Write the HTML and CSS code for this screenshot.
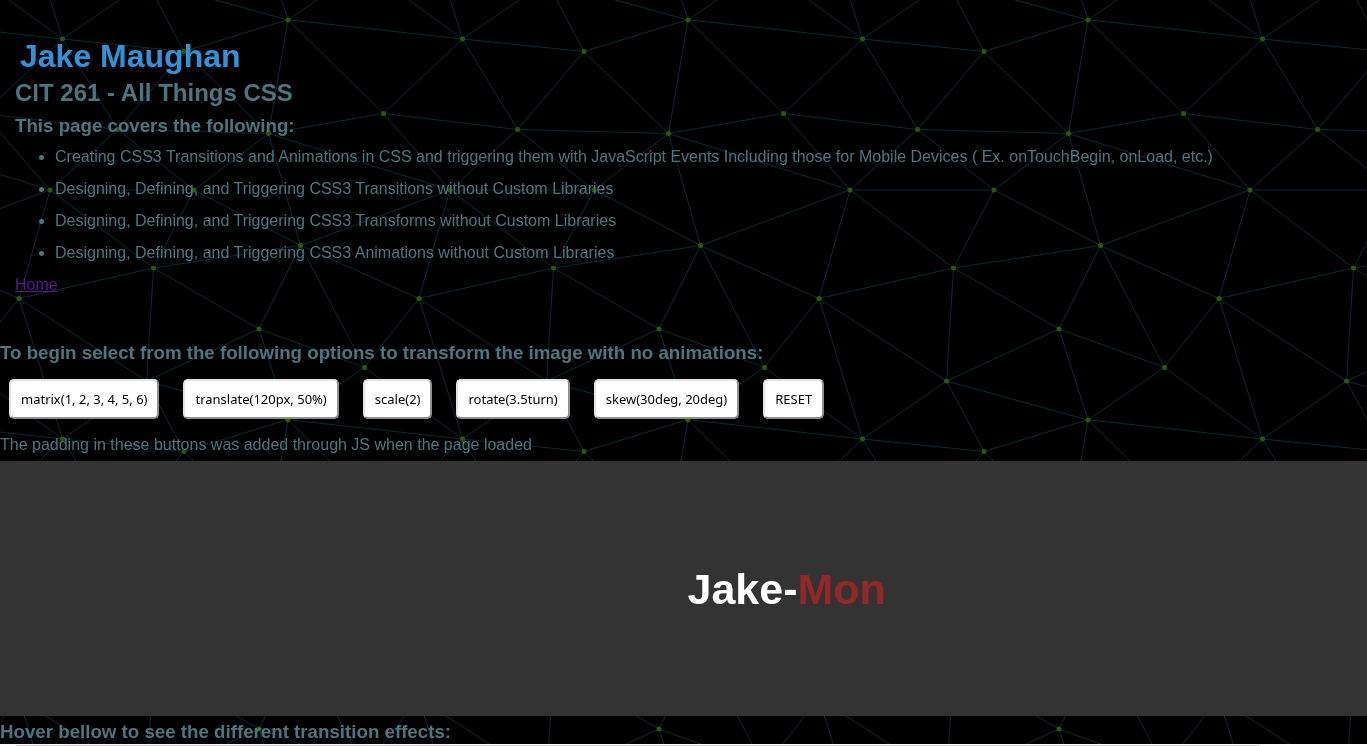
FILE: index.html
```html
<!DOCTYPE html>
<html lang="en">
<head>
<meta charset="utf-8">
<title>Jake Maughan - All Things CSS</title>
<link rel="stylesheet" href="styles.css">
</head>
<body>
<svg class="mesh" aria-hidden="true">
  <defs>
    <g id="web">
      <path class="mesh-line" d="M288 19.700L462.500 39M288 19.700L184 51.500M288 19.700L268.500 133.500M288 19.700L383.500 113.500
        M259 329L288 420M364.300 367.300L288 420M146.600 381L288 420
        M19 298.500L62.500 439M146.600 381L62.500 439M364.300 367.300L462.500 439M62.500 39L184 51.500M62.500 39L117.500 129.500M383.500 113.500L462.500 39
        M146.600 381L184 451.500M184 51.500L117.500 129.500M184 51.500L268.500 133.500
        M383.500 113.500L268.500 133.500M383.500 113.500L517.500 129.500M383.500 113.500L450 190
        M117.500 129.500L268.500 133.500M117.500 129.500L50 190M117.500 129.500L194 190
        M268.500 133.500L194 190M268.500 133.500L300.500 245.500M268.500 133.500L450 190
        M50 190H194M300.500 245.500L450 190M50 190L19 298.500M50 190L153.500 268
        M194 190L153.500 268M194 190L300.500 245.500
        M300.500 245.500L153.500 268M300.500 245.500L259 329M300.500 245.500L364.300 367.300M300.500 245.500L419 298.500
        M153.500 268L19 298.500M153.500 268L146.600 381M153.500 268L259 329
        M19 298.500L146.600 381M364.300 367.300L419 298.500M259 329L364.300 367.300M259 329L146.600 381"/>
    </g>
    <g id="dots" class="mesh-dot">
      <circle cx="288" cy="20" r="2.500"/><circle cx="62.500" cy="39" r="2.500"/><circle cx="184" cy="51.500" r="2.500"/>
      <circle cx="383.500" cy="113.500" r="2.500"/><circle cx="117.500" cy="129.500" r="2.500"/><circle cx="268.500" cy="133.500" r="2.500"/>
      <circle cx="50" cy="190" r="2.500"/><circle cx="194" cy="190" r="2.500"/><circle cx="300.500" cy="245.500" r="2.500"/>
      <circle cx="153.500" cy="268" r="2.500"/><circle cx="19" cy="298.500" r="2.500"/><circle cx="259" cy="329" r="2.500"/>
      <circle cx="364.500" cy="367.500" r="2.500"/><circle cx="146.500" cy="381" r="2.500"/>
    </g>
    <pattern id="tile" width="400" height="400" patternUnits="userSpaceOnUse">
      <use href="#web"/>
      <use href="#web" x="-400"/>
      <use href="#web" y="-400"/>
      <use href="#web" x="-400" y="-400"/>
      <use href="#dots"/>
    </pattern>
  </defs>
  <rect width="100%" height="100%" fill="url(#tile)"/>
</svg>

<header class="intro">
  <h1 class="name">Jake Maughan</h1>
  <h2 class="course">CIT 261 - All Things CSS</h2>
  <h3 class="heading">This page covers the following:</h3>
  <ul class="topics">
    <li>Creating CSS3 Transitions and Animations in CSS and triggering them with JavaScript Events Including those for Mobile Devices ( Ex. onTouchBegin, onLoad, etc.)</li>
    <li>Designing, Defining, and Triggering CSS3 Transitions without Custom Libraries</li>
    <li>Designing, Defining, and Triggering CSS3 Transforms without Custom Libraries</li>
    <li>Designing, Defining, and Triggering CSS3 Animations without Custom Libraries</li>
  </ul>
  <a class="home" href="#">Home</a>
</header>

<main>
  <section class="transforms">
    <h3 class="heading">To begin select from the following options to transform the image with no animations:</h3>
    <div class="options">
      <button type="button">matrix(1, 2, 3, 4, 5, 6)</button>
      <button type="button">translate(120px, 50%)</button>
      <button type="button">scale(2)</button>
      <button type="button">rotate(3.5turn)</button>
      <button type="button">skew(30deg, 20deg)</button>
      <button type="button">RESET</button>
    </div>
    <p class="note">The padding in these buttons was added through JS when the page loaded</p>
  </section>
  <div class="stage">
    <div class="logo">Jake-<span class="logo-accent">Mon</span></div>
  </div>
  <section class="transitions">
    <h3 class="heading">Hover bellow to see the different transition effects:</h3>
    <div class="panel"><div class="panel-box"></div></div>
  </section>
</main>
</body>
</html>
```
FILE: styles.css
```css
body {
  height: 100vh;
  margin: 0;
  overflow: hidden;
  background: #000;
  color: #4a7681;
  font: 16px/32px "Liberation Sans", Arial, sans-serif;
}

h1, h2, h3, p, ul {
  margin: 0;
}

.mesh {
  position: fixed;
  inset: 0;
  z-index: -1;
  width: 100%;
  height: 100%;
}

.mesh-line {
  fill: none;
  stroke: #052a33;
  stroke-width: 1;
}

.mesh-dot {
  fill: #265a08;
}

.intro {
  padding: 36px 15px 0;
}

.name {
  padding-left: 5px;
  color: #3093da;
  font-size: 32px;
  line-height: 40px;
}

.course {
  font-size: 24px;
  line-height: 34px;
}

.heading {
  padding-top: 4px;
  line-height: 24px;
}

.topics {
  padding: 3px 0 0 40px;
}

.home {
  color: #551a8b;
}

.transforms {
  padding-top: 36px;
}

.options {
  display: flex;
  flex-wrap: wrap;
  gap: 24px;
  padding: 14px 9px 10px;
}

.options button {
  padding: 10px;
  border: 2px outset #e3e3e3;
  border-radius: 5px;
  background: #fff;
  color: #000;
  font: 13px/16px Tahoma, "Noto Sans", sans-serif;
}

.stage {
  display: flex;
  align-items: center;
  height: 255px;
  background: #333;
}

.logo {
  margin-left: 50%;
  padding-left: 4px;
  color: #fff;
  font: bold 43px/60px "Liberation Sans", Arial, sans-serif;
}

.logo-accent {
  color: #942728;
}

.panel {
  padding: 1px 108px 0 16px;
  background: #fff;
}

.panel-box {
  border-top: 1px solid #ccc;
}
```
